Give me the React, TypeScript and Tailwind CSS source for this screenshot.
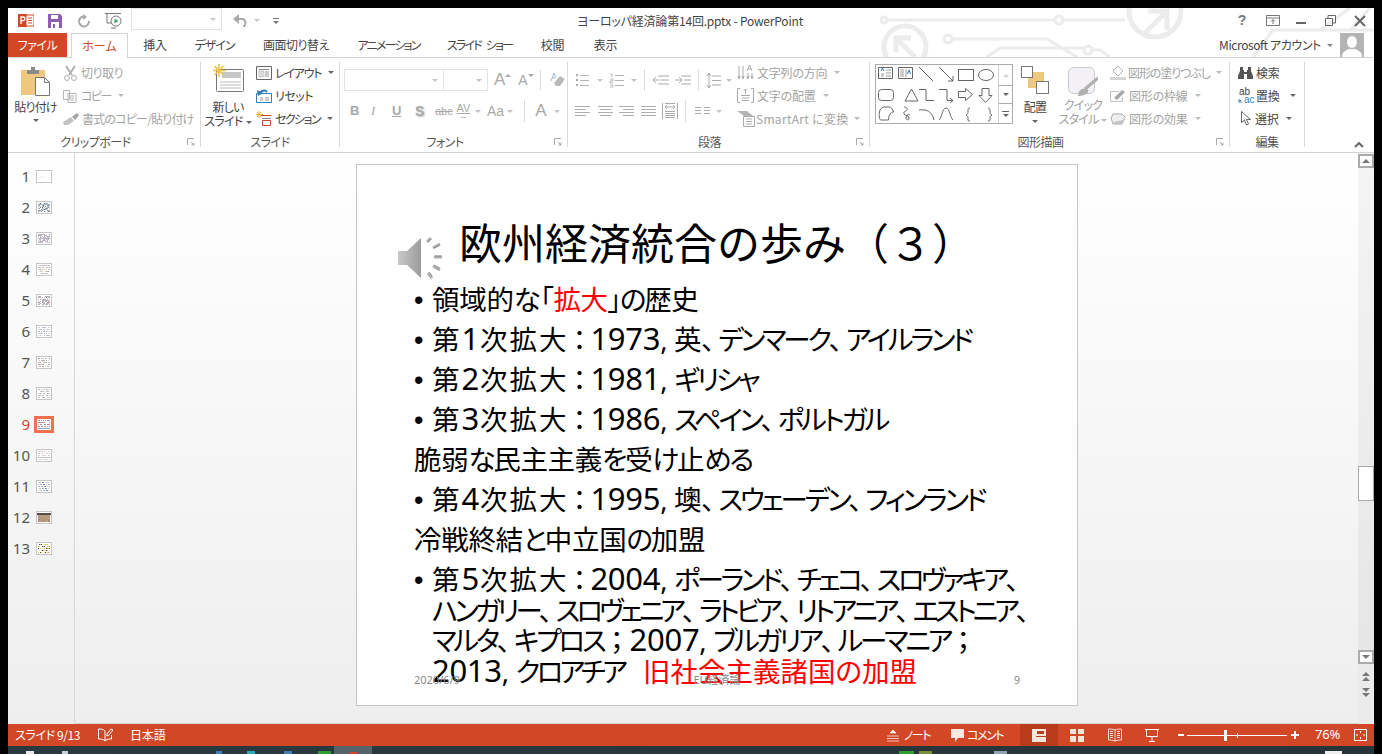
import type { ReactNode } from "react"

const ui = "font-['Noto_Sans_CJK_JP','Noto_Sans',sans-serif] [font-feature-settings:'palt']"

function Caret({ color = "border-t-[#8a8a8a]" }: { color?: string }) {
	return <span className={`inline-block w-0 h-0 border-x-[3px] border-t-[3px] border-x-transparent ${color}`} />
}

function Launcher() {
	return (
		<svg width="8" height="8" viewBox="0 0 8 8" className="absolute right-[5px] bottom-[1px]">
			<path d="M0.5 7V0.5H7M4 4l3 3M7 4.5V7H4.5" fill="none" stroke="#a8a8a8" />
		</svg>
	)
}

function Group({ width, label, children, launcher, labelPad = "" }: { width: string; label: string; children: ReactNode; launcher?: boolean; labelPad?: string }) {
	return (
		<div className={`${width} relative shrink-0 h-[85px] mt-1 flex flex-col border-r border-[#dadada]`}>
			<div className="flex h-[72px]">{children}</div>
			<div className={`h-4 -mb-[3px] text-center text-xs leading-4 text-[#555] tracking-[-0.5px] ${labelPad}`}>{label}</div>
			{launcher && <Launcher />}
		</div>
	)
}

function Row({ icon, label, caret, dark, gap = "gap-[3px]", track = "tracking-[-0.2px]" }: { icon: ReactNode; label: string; caret?: boolean; dark?: boolean; gap?: string; track?: string }) {
	return (
		<div className={`h-[23px] flex items-center ${gap} text-xs whitespace-nowrap ${dark ? "text-[#444]" : "text-[#a3a3a3]"}`}>
			{icon}
			<span className={track}>{label}</span>
			{caret && (
				<span className="ml-1 flex">
					<Caret color={dark ? "border-t-[#666]" : "border-t-[#bbb]"} />
				</span>
			)}
		</div>
	)
}

function Ico({ w = 16, h = 16, children }: { w?: number; h?: number; children: ReactNode }) {
	return (
		<svg width={w} height={h} viewBox={`0 0 ${w} ${h}`} className="shrink-0">
			{children}
		</svg>
	)
}

function Sep({ h = "h-[22px]" }: { h?: string }) {
	return <span className={`block w-px ${h} bg-[#dcdcdc] shrink-0`} />
}

function ListLines({ x = 0, c = "#b5b5b5" }: { x?: number; c?: string }) {
	return <path d={`M${x + 5} 3.5h9M${x + 5} 8.5h9M${x + 5} 13.5h9`} stroke={c} fill="none" />
}

function AlignIcon({ d }: { d: string }) {
	return (
		<Ico w={15} h={12}>
			<path d={d} stroke="#adadad" fill="none" />
		</Ico>
	)
}

function TitleArt() {
	return (
		<svg width="494" height="49" viewBox="0 0 494 49" className="absolute right-0 top-0 pointer-events-none">
			<g fill="none" stroke="#ececec" strokeWidth="3">
				<circle cx="25" cy="39" r="21" strokeWidth="5" />
				<path d="M16 44V30h15M17 31l18 18" strokeWidth="5" />
				<circle cx="4" cy="12" r="3" />
				<path d="M8 12H174M184 12H245" />
				<circle cx="179" cy="12" r="4" />
				<circle cx="275" cy="3" r="26" strokeWidth="5" />
				<path d="M263 27L286 4M268 3h19v19" strokeWidth="5" />
				<circle cx="68" cy="31" r="4" />
				<path d="M73 31H167L197 49" />
				<path d="M107 49L120 40H203" />
				<circle cx="208" cy="42" r="4" />
				<path d="M213 42H220L230 49" />
				<path d="M373 49L393 22H494M440 22L470 0M470 22L490 0" />
			</g>
		</svg>
	)
}

function TitleBar() {
	return (
		<div className="relative h-[25px] bg-white flex items-center text-xs text-[#444]">
			<TitleArt />
			<div className="relative flex items-center pl-[10px]">
				<Ico w={16} h={15}>
					<rect x="0" y="1" width="9" height="13" fill="#d24726" />
					<rect x="8" y="2" width="8" height="11" fill="#fff" stroke="#d24726" />
					<path d="M10 5h4M10 7.5h4M10 10h4" stroke="#d24726" />
					<path d="M3 11V4h2.2a1.8 1.8 0 010 3.6H3" fill="none" stroke="#fff" strokeWidth="1.3" />
				</Ico>
				<span className="w-[14px]" />
				<Ico w={14} h={14}>
					<path d="M0 0h12l2 2v12H0z" fill="#8f5bb5" />
					<rect x="3" y="1" width="7" height="4" fill="#fff" />
					<rect x="3" y="8" width="8" height="6" fill="#fff" />
					<rect x="5" y="10" width="2" height="4" fill="#8f5bb5" />
				</Ico>
				<span className="w-[15px]" />
				<Ico w={14} h={14}>
					<path d="M8 2.5A5 5 0 1 0 12 7" fill="none" stroke="#aaa" strokeWidth="2" />
					<path d="M6 0v6l4-3z" fill="#aaa" />
				</Ico>
				<span className="w-[14px]" />
				<Ico w={17} h={16}>
					<path d="M0 .5h16M2 1v9h5M6 15h5" stroke="#777" fill="none" />
					<circle cx="11" cy="8" r="5" fill="#fff" stroke="#777" />
					<path d="M9.5 5.5v5l4-2.500z" fill="#4c9b6b" />
				</Ico>
				<div className="ml-[9px] w-[91px] h-[22px] -mt-[3px] border border-[#e2e2e2] flex items-center justify-end pr-[5px]">
					<Caret color="border-t-[#c8c8c8]" />
				</div>
				<span className="w-[11px]" />
				<Ico w={16} h={13}>
					<path d="M1 5h9a4.500 4.500 0 010 8" fill="none" stroke="#aaa" strokeWidth="2" />
					<path d="M6 0L0 5l6 5z" fill="#aaa" />
				</Ico>
				<span className="ml-[5px] flex">
					<Caret color="border-t-[#c4c4c4]" />
				</span>
				<span className="ml-[13px] flex flex-col gap-[2px] items-center">
					<span className="w-[6px] h-px bg-[#777]" />
					<Caret color="border-t-[#777]" />
				</span>
			</div>
			<div className="absolute left-[560px] w-[244px] text-center text-xs tracking-[-0.2px] whitespace-nowrap text-[#444]">ヨーロッパ経済論第14回.pptx - PowerPoint</div>
			<div className="relative ml-auto flex items-center text-[#777] pr-[8px]">
				<span className="w-[12px] mr-[18px] text-center font-bold text-[14px] font-['Liberation_Sans',sans-serif]">?</span>
				<Ico w={14} h={11}>
					<path d="M.5.5h13v10H.5zM.5 3h13" fill="none" stroke="#777" />
					<path d="M7 9V5M5 6.500l2-2 2 2" fill="none" stroke="#777" />
				</Ico>
				<span className="w-[16px]" />
				<span className="w-[10px] h-[2px] bg-[#666] mt-[5px]" />
				<span className="w-[19px]" />
				<Ico w={11} h={11}>
					<path d="M.5 3.500h7v7h-7zM3 3V.5h7.500V8H8" fill="none" stroke="#666" strokeWidth="1" />
				</Ico>
				<span className="w-[18px]" />
				<Ico w={12} h={12}>
					<path d="M1 1l10 10M11 1L1 11" stroke="#666" strokeWidth="2" />
				</Ico>
			</div>
		</div>
	)
}

const tabs: [string, string][] = [
	["挿入", "w-[24px] ml-[15px] tracking-[-0.2px]"],
	["デザイン", "w-[39px] ml-[28px] tracking-[-1px]"],
	["画面切り替え", "w-[66px] ml-[29px] tracking-[-0.5px]"],
	["アニメーション", "w-[61px] ml-[29px] tracking-[-1.8px]"],
	["スライド ショー", "w-[63px] ml-[29px] tracking-[-1.8px] [word-spacing:4px]"],
	["校閲", "w-[23px] ml-[30px] tracking-[-0.2px]"],
	["表示", "w-[23px] ml-[30px] tracking-[-0.2px]"],
]

function Tabs() {
	return (
		<div className="relative h-[25px] bg-transparent flex items-stretch text-xs text-[#444] border-b border-[#d4d4d4]">
			<div className="w-[59px] bg-[#d24726] text-white flex items-center justify-center tracking-[-0.5px]">ファイル</div>
			<div className="ml-[4px] w-[57px] h-[25px] bg-white border border-b-0 border-[#d4d4d4] text-[#d24726] flex items-center justify-center">ホーム</div>
			{tabs.map(([t, c]) => (
				<div key={t} className={`${c} flex items-center justify-center whitespace-pre`}>
					{t}
				</div>
			))}
			<div className="ml-auto flex items-center pr-[10px]">
				<span className="text-xs tracking-[-0.4px] whitespace-nowrap">Microsoft アカウント</span>
				<span className="ml-[6px] flex">
					<Caret color="border-t-[#888]" />
				</span>
				<div className="ml-[7px] w-[24px] h-[24px] bg-[#b4b4b4] overflow-hidden">
					<svg width="24" height="24" viewBox="0 0 24 24">
						<ellipse cx="12" cy="9" rx="5" ry="6" fill="#fff" />
						<path d="M2 24c0-6 5-7 7-8h6c2 1 7 2 7 8z" fill="#fff" />
					</svg>
				</div>
			</div>
		</div>
	)
}

function BigLabel({ lines, gray, caret }: { lines: string[]; gray?: boolean; caret?: boolean }) {
	return (
		<div className={`text-xs leading-[14px] text-center tracking-[-0.8px] whitespace-nowrap ${gray ? "text-[#a0a0a0]" : "text-[#444]"}`}>
			{lines.map((l, i) => (
				<div key={l}>
					{l}
					{caret && i === lines.length - 1 && (
						<span className="ml-[3px] inline-flex align-middle">
							<Caret color={gray ? "border-t-[#bbb]" : "border-t-[#666]"} />
						</span>
					)}
				</div>
			))}
		</div>
	)
}

function ClipboardGroup() {
	return (
		<Group width="w-[193px]" label="クリップボード" launcher labelPad="pr-[17px]">
			<div className="w-[55px] flex flex-col items-center pt-[5px]">
				<svg width="29" height="29" viewBox="0 0 29 29">
					<rect x="0" y="3" width="24" height="25" fill="#edc87e" />
					<rect x="6" y="3" width="12" height="4" fill="#8a8a8a" />
					<rect x="10" y="0" width="4" height="4" fill="#8a8a8a" />
					<path d="M14.500 10.500h9l5 5v13h-14z" fill="#fff" stroke="#777" />
					<path d="M23.500 10.500v5h5" fill="none" stroke="#777" />
				</svg>
				<div className="mt-[4px]">
					<BigLabel lines={["貼り付け"]} />
				</div>
				<span className="mt-[5px] flex">
					<Caret color="border-t-[#666]" />
				</span>
			</div>
			<div className="flex flex-col -mt-px">
				<Row
					label="切り取り"
					track="tracking-[-0.5px]"
					icon={
						<Ico w={15} h={16}>
							<path d="M3 1l6 9M12 1L6 10" stroke="#b0b0b0" strokeWidth="2" />
							<circle cx="4" cy="13" r="2.500" fill="none" stroke="#b0b0b0" />
							<circle cx="11" cy="13" r="2.500" fill="none" stroke="#b0b0b0" />
						</Ico>
					}
				/>
				<Row
					label="コピー"
					caret
					track="tracking-[-1.5px]"
					icon={
						<Ico w={15} h={14}>
							<path d="M.5 1.500h6v9h-6zM5 4.500h8v9H5z" fill="#fff" stroke="#b5b5b5" />
							<path d="M7 7h4M7 9h4M7 11h4" stroke="#b5b5b5" />
						</Ico>
					}
				/>
				<Row
					label="書式のコピー/貼り付け"
					track="tracking-[-0.8px]"
					icon={
						<Ico w={16} h={13}>
							<path d="M0 10L8 5l3 4-6 4H1z" fill="#c2c2c2" />
							<path d="M9 5l5-4 2 2-4 5z" fill="#a0a0a0" />
						</Ico>
					}
				/>
			</div>
		</Group>
	)
}

function SlidesGroup() {
	return (
		<Group width="w-[139px]" label="スライド">
			<div className="w-[54px] flex flex-col items-center">
				<svg width="32" height="29" viewBox="0 0 32 29" className="mt-[2px] ml-[2px] shrink-0">
					<rect x="3.500" y="5.500" width="27" height="22" rx="1" fill="#fff" stroke="#777" />
					<rect x="9" y="8" width="19" height="6" fill="#c8c8c8" />
					<path d="M7 18h21M7 21h21M7 24h21" stroke="#bbb" />
					<path d="M6 0v13M0 6.500h13M1.500 2l9 9M10.500 2l-9 9" stroke="#f0c04a" strokeWidth="1.500" />
				</svg>
				<div className="mt-[7px]">
					<BigLabel lines={["新しい", "スライド"]} caret />
				</div>
			</div>
			<div className="ml-[1px] flex flex-col -mt-px">
				<Row
					label="レイアウト"
					caret
					gap="gap-[3px]"
					track="tracking-[-1.2px]"
					icon={
						<Ico w={16} h={14}>
							<path d="M.5.5h15v13H.5z" fill="#fff" stroke="#666" />
							<path d="M3 3.500h10" stroke="#888" />
							<rect x="3" y="5" width="5" height="6" fill="#ddd" stroke="#aaa" strokeWidth=".5" />
							<path d="M9 6h4M9 8h4M9 10h4" stroke="#999" />
						</Ico>
					}
					dark
				/>
				<Row
					label="リセット"
					gap="gap-[3px]"
					track="tracking-[-0.5px]"
					icon={
						<Ico w={16} h={14}>
							<path d="M.5 4.500h15v9H.5z" fill="#fff" stroke="#2f7ebc" />
							<path d="M4 5a4 4 0 017-2" fill="none" stroke="#2f7ebc" strokeWidth="2" />
							<path d="M1 1l1 6 5-3z" fill="#2f7ebc" />
							<path d="M4 9h3M4 11h3" stroke="#999" />
							<rect x="9" y="8" width="4" height="4" fill="#ccc" />
						</Ico>
					}
					dark
				/>
				<Row
					label="セクション"
					caret
					gap="gap-[3px]"
					track="tracking-[-1.6px]"
					icon={
						<Ico w={16} h={15}>
							<path d="M3 0v7M0 3.500h7M1 1l4 5M5 1L1 6" stroke="#f0b040" />
							<path d="M5 4.500h10.500M6.500 9.500h8v5h-8z" stroke="#d24726" fill="none" />
							<path d="M6 7.500h9" stroke="#888" />
						</Ico>
					}
					dark
				/>
			</div>
		</Group>
	)
}

function FontGroup() {
	return (
		<Group width="w-[228px]" label="フォント" launcher labelPad="pr-[17px]">
			<div className="pl-[4px] flex flex-col">
				<div className="mt-[7px] flex items-center h-[22px]">
					<div className="w-[100px] h-[22px] border border-[#e2e2e2] flex items-center justify-end pr-[5px]">
						<Caret color="border-t-[#c4c4c4]" />
					</div>
					<div className="w-[44px] h-[22px] border border-l-0 border-[#e2e2e2] flex items-center justify-end pr-[5px]">
						<Caret color="border-t-[#c4c4c4]" />
					</div>
					<span className="ml-[6px] text-[17px] text-[#a8a8a8] font-['Liberation_Sans',sans-serif]">A</span>
					<span className="-mt-[9px] flex rotate-180">
						<Caret color="border-t-[#a8a8a8]" />
					</span>
					<span className="ml-[7px] text-[14px] text-[#a8a8a8] font-['Liberation_Sans',sans-serif]">A</span>
					<span className="-mt-[9px] flex">
						<Caret color="border-t-[#a8a8a8]" />
					</span>
					<span className="ml-[6px]">
						<Sep h="h-[20px]" />
					</span>
					<span className="ml-[8px] flex">
						<Ico w={16} h={16}>
							<path d="M7 14l-2-3 6-7 5 3-5 7z" fill="#b9b9b9" />
							<path d="M2 9l3-8 2 5M3 6h3" fill="none" stroke="#9dbbd6" />
						</Ico>
					</span>
				</div>
				<div className="mt-[9px] h-[22px] flex items-center text-[#a9a9a9] font-['Liberation_Sans',sans-serif]">
					<span className="ml-[6px] w-[21px] text-[13px] font-bold">B</span>
					<span className="w-[21px] text-[13px] italic font-['Liberation_Serif',serif]">I</span>
					<span className="w-[23px] text-[13px] font-bold underline">U</span>
					<span className="w-[20px] text-[14px] font-bold [text-shadow:1px_1px_2px_#bbb]">S</span>
					<span className="w-[19px] text-[11px] line-through">abc</span>
					<span className="w-[19px] flex flex-col items-center text-[11px] leading-[10px]">
						<span className="underline">AV</span>
						<span className="text-[9px] leading-[7px]">↔</span>
					</span>
					<span className="ml-[2px] w-[6px] flex">
						<Caret color="border-t-[#c4c4c4]" />
					</span>
					<span className="ml-[6px] text-[14px]">Aa</span>
					<span className="ml-[3px] flex">
						<Caret color="border-t-[#c4c4c4]" />
					</span>
					<span className="ml-[11px]">
						<Sep />
					</span>
					<span className="ml-[10px] text-[17px]">A</span>
					<span className="ml-[8px] flex">
						<Caret color="border-t-[#c4c4c4]" />
					</span>
				</div>
			</div>
		</Group>
	)
}

function ParagraphGroup() {
	const dd = (
		<span className="flex">
			<Caret color="border-t-[#c4c4c4]" />
		</span>
	)
	return (
		<Group width="w-[302px]" label="段落" launcher labelPad="pr-[18px]">
			<div className="w-[169px] pl-[7px] flex flex-col">
				<div className="mt-[7px] h-[22px] flex items-center">
					<Ico w={15} h={16}>
						<path d="M1 3h2M1 8h2M1 13h2" stroke="#aaa" strokeWidth="2" />
						<ListLines />
					</Ico>
					<span className="ml-[7px]">{dd}</span>
					<span className="ml-[6px]" />
					<Ico w={16} h={16}>
						<path d="M1 2h2v3M1 7h3v2H1v2h3M1 13h3v2H1" stroke="#aaa" fill="none" strokeWidth=".8" />
						<ListLines x={1} />
					</Ico>
					<span className="ml-[6px]">{dd}</span>
					<span className="ml-[7px]">
						<Sep />
					</span>
					<span className="ml-[7px] flex">
						<Ico w={17} h={12}>
							<path d="M6 2h11M9 6h8M6 10h11" stroke="#aaa" fill="none" />
							<path d="M8 6H1M4 3L1 6l3 3" stroke="#aaa" fill="none" />
						</Ico>
					</span>
					<span className="ml-[6px] flex">
						<Ico w={16} h={12}>
							<path d="M6 2h10M9 6h7M6 10h10" stroke="#aaa" fill="none" />
							<path d="M0 6h7M4 3l3 3-3 3" stroke="#aaa" fill="none" />
						</Ico>
					</span>
					<span className="ml-[7px]">
						<Sep />
					</span>
					<span className="ml-[7px] flex">
						<Ico w={15} h={17}>
							<path d="M6 4h9M6 8.500h9M6 13h9" stroke="#aaa" fill="none" />
							<path d="M3 1v15M1 4l2-3 2 3M1 13l2 3 2-3" stroke="#aaa" fill="none" />
						</Ico>
					</span>
					<span className="ml-[5px]">{dd}</span>
				</div>
				<div className="mt-[9px] h-[22px] flex items-center">
					<AlignIcon d="M0 1.500h15M0 4.500h11M0 7.500h15M0 10.500h11" />
					<span className="w-[8px]" />
					<AlignIcon d="M0 1.500h15M2 4.500h11M0 7.500h15M2 10.500h11" />
					<span className="w-[6px]" />
					<AlignIcon d="M0 1.500h15M4 4.500h11M0 7.500h15M4 10.500h11" />
					<span className="w-[7px]" />
					<AlignIcon d="M0 1.500h15M0 4.500h15M0 7.500h15M0 10.500h15" />
					<span className="w-[6px]" />
					<Ico w={16} h={18}>
						<path d="M.5 1v16M15.500 1v16M3 1.500h10M3 15.500h10M3 11.500h10M3 13.500h10M3 9.500h10" stroke="#aaa" fill="none" />
						<path d="M3 5h10M5 3L3 5l2 2M11 3l2 2-2 2" stroke="#aaa" fill="none" />
					</Ico>
					<span className="ml-[7px]">
						<Sep />
					</span>
					<span className="w-[9px]" />
					<Ico w={15} h={10}>
						<path d="M0 1.500h6M9 1.500h6M0 4.500h6M9 4.500h6M0 7.500h6M9 7.500h6" stroke="#aaa" fill="none" />
					</Ico>
					<span className="ml-[6px]">{dd}</span>
				</div>
			</div>
			<div className="flex flex-col -mt-px">
				<Row
					label="文字列の方向"
					caret
					icon={
						<Ico w={17} h={17}>
							<path d="M2 2v12M6 2v12M1 12l1 3 1-3M5 12l1 3 1-3" stroke="#aaa" fill="none" />
							<path d="M10 7l2.500-6L15 7M11 5h3M11 9v5M15 9v5M10 12l1 3 1-3M14 12l1 3 1-3" stroke="#aaa" fill="none" />
						</Ico>
					}
				/>
				<Row
					label="文字の配置"
					caret
					icon={
						<Ico w={17} h={15}>
							<path d="M3 .5H.5v14H3M14 .5h2.500v14H14" stroke="#aaa" fill="none" />
							<path d="M4 7.500h9M5 10h7M5 12.500h7" stroke="#aaa" />
							<path d="M8.500 1v5M7 2.500L8.500 1 10 2.500" stroke="#aaa" fill="none" />
						</Ico>
					}
				/>
				<Row
					label="SmartArt に変換"
					caret
					gap="gap-[1px]"
					track="tracking-[0.3px]"
					icon={
						<Ico w={18} h={16}>
							<path d="M0 0h10l6 5H7z" fill="#b5b5b5" />
							<path d="M6.500 5.500h11v10h-11z" fill="#fff" stroke="#aaa" />
							<path d="M9 8h6M9 10.500h6M9 13h6" stroke="#aaa" />
						</Ico>
					}
				/>
			</div>
		</Group>
	)
}

function ShapeGallery() {
	return (
		<div className="mt-[2px] ml-[5px] w-[138px] h-[60px] border border-[#ababab] flex bg-white shrink-0">
			<svg width="122" height="58" viewBox="0 0 122 58" className="shrink-0">
				<g transform="translate(-1 -1)" fill="none" stroke="#666">
					<path d="M3.500 3.500h14v11h-14z" />
					<path d="M6 7l1.500-3 1.500 3" stroke="#2f7ebc" />
					<path d="M6 10h3M11 6h5M11 9h5M11 12h5M6 12h3" stroke="#999" />
					<path d="M23.500 3.500h14v11h-14z" />
					<path d="M26 5v8M28 5v8M31 5v8" stroke="#999" />
					<path d="M32.500 10l1.500-4 1.500 4" stroke="#2f7ebc" />
					<path d="M44 3l14 14" />
					<path d="M64 3l14 14M73 17h5v-5" />
					<rect x="83.500" y="5.500" width="15" height="11" />
					<ellipse cx="111" cy="11" rx="7.500" ry="5.500" />
					<rect x="3.500" y="25.500" width="15" height="11" rx="3" />
					<path d="M30 37l6.500-12L43 37z" />
					<path d="M44 25.500h7v11h8" />
					<path d="M64 25.500h8v11h6M75 34l3 2.500-3 2.500" />
					<path d="M83.500 27.500h7v-3l7 6-7 6v-3h-7z" />
					<path d="M107 24.500h7v7h3l-6.500 7-6.500-7h3z" />
					<path d="M4.500 48c0-3 3-5 5-5l4 0c3 0 4 2 5 5 0 0-5 0-5 8H6c-2 0-2-5-1.500-8z" />
					<path d="M29 43c2 0 4 1 3 3s-4 1-3 4c1 2 5 1 5 4s-3 2-3 0c0-3 3-4 4-3" />
					<path d="M44 46c7-1 13 1 15 10" />
					<path d="M64 56c3-2 3-12 7-12s4 10 7 12" />
					<path d="M95 44c-2 0-2 1-2 3s0 3-2 4c2 1 2 2 2 4s0 2 2 2" />
					<path d="M113 44c2 0 2 1 2 3s0 3 2 4c-2 1-2 2-2 4s0 2-2 2" />
				</g>
			</svg>
			<div className="flex-1 flex flex-col border-l border-[#d0d0d0]">
				<div className="h-[20px] flex items-center justify-center">
					<span className="flex rotate-180">
						<Caret color="border-t-[#cfcfcf]" />
					</span>
				</div>
				<div className="h-[19px] flex items-center justify-center border-y border-[#ababab]">
					<Caret color="border-t-[#666]" />
				</div>
				<div className="flex-1 flex flex-col items-center justify-center gap-[2px]">
					<span className="w-[7px] h-px bg-[#666]" />
					<Caret color="border-t-[#666]" />
				</div>
			</div>
		</div>
	)
}

function DrawingGroup() {
	return (
		<Group width="w-[360px]" label="図形描画" launcher labelPad="pr-[18px]">
			<ShapeGallery />
			<div className="w-[44px] shrink-0 flex flex-col items-center pt-[4px]">
				<svg width="28" height="28" viewBox="0 0 28 28" className="shrink-0">
					<rect x="7" y="6" width="16" height="16" fill="#edc87e" />
					<rect x=".5" y=".5" width="11" height="11" fill="#fff" stroke="#777" />
					<rect x="15.500" y="15.500" width="12" height="12" fill="#fff" stroke="#777" />
				</svg>
				<div className="mt-[6px]">
					<BigLabel lines={["配置"]} />
				</div>
				<span className="mt-[6px] flex">
					<Caret color="border-t-[#666]" />
				</span>
			</div>
			<div className="w-[52px] shrink-0 flex flex-col items-center pt-[5px]">
				<svg width="30" height="30" viewBox="0 0 30 30" className="shrink-0">
					<rect x=".5" y=".5" width="26" height="26" rx="5" fill="#f4f1f6" stroke="#c8c8c8" />
					<path d="M30 11L17 22" stroke="#b0b0b0" strokeWidth="3" />
					<path d="M10 29c0-6 5-9 9-7s-1 7-9 7z" fill="#b0b0b0" />
				</svg>
				<div className="mt-[1px]">
					<BigLabel lines={["クイック", "スタイル"]} gray caret />
				</div>
			</div>
			<div className="flex flex-col shrink-0 ml-px -mt-px">
				<Row
					label="図形の塗りつぶし"
					caret
					gap="gap-[2px]"
					track="tracking-[-1.1px]"
					icon={
						<Ico w={16} h={15}>
							<path d="M3 6l5-5 5 5-5 5z" fill="#fff" stroke="#b0b0b0" />
							<rect x="0" y="12" width="16" height="3" fill="#d5d5d5" />
						</Ico>
					}
				/>
				<Row
					label="図形の枠線"
					caret
					gap="gap-[3px]"
					icon={
						<Ico w={16} h={14}>
							<path d="M9 2.500H.5v10h12V8" fill="none" stroke="#c0c0c0" />
							<path d="M4 9l8-8 3 2-8 8z" fill="#a5a5a5" />
						</Ico>
					}
				/>
				<Row
					label="図形の効果"
					caret
					gap="gap-[3px]"
					icon={
						<Ico w={16} h={12}>
							<path d="M3 1h9l3 3-3 7H3L1 5z" fill="#efefef" stroke="#a8a8a8" />
							<path d="M4 11h9l2-6-2 2-9 2z" fill="#c4c4c4" />
						</Ico>
					}
				/>
			</div>
		</Group>
	)
}

function EditGroup() {
	return (
		<Group width="w-[75px]" label="編集">
			<div className="pl-[8px] flex flex-col -mt-px">
				<Row
					label="検索"
					dark
					gap="gap-[3px]"
					icon={
						<Ico w={15} h={13}>
							<path d="M2 1h3v3h1v2h3V4h1V1h3v4l2 5v3H9V8H6v5H0v-3l2-5z" fill="#555" />
						</Ico>
					}
				/>
				<div className="h-[23px] flex items-center text-xs text-[#444]">
					<Ico w={15} h={15}>
						<path d="M1 11v3h3M1 14l2-2" stroke="#2f7ebc" fill="none" />
					</Ico>
					<span className="absolute ml-[1px] text-[10px] leading-[8px] font-['Liberation_Sans',sans-serif]">
						<span className="block">ab</span>
						<span className="block pl-[5px] text-[#2f7ebc]">ac</span>
					</span>
					<span className="ml-[3px] tracking-[-0.2px]">置換</span>
					<span className="ml-[10px] flex">
						<Caret color="border-t-[#666]" />
					</span>
				</div>
				<Row
					label="選択"
					caret
					dark
					gap="gap-[3px]"
					icon={
						<span className="ml-[3px] flex">
							<Ico w={11} h={15}>
								<path d="M.5.5v11l3-2.500 2 5 2-1-2-4.500h4z" fill="#fff" stroke="#666" />
							</Ico>
						</span>
					}
				/>
			</div>
		</Group>
	)
}

function Ribbon() {
	return (
		<div className="relative h-[95px] bg-transparent flex items-start border-b border-[#d4d4d4]">
			<ClipboardGroup />
			<SlidesGroup />
			<FontGroup />
			<ParagraphGroup />
			<DrawingGroup />
			<EditGroup />
			<div className="ml-auto self-end mb-[4px] mr-[10px] flex">
				<svg width="10" height="6" viewBox="0 0 10 6">
					<path d="M1 5l4-4 4 4" fill="none" stroke="#666" strokeWidth="2" />
				</svg>
			</div>
		</div>
	)
}

const thumbPalette: string[][] = [
	["#e4e4e4", "#d8e2ea"],
	["#8fa3b5", "#c4c4c4", "#6e8094", "#5a5a5a"],
	["#a5a5b5", "#c9a9bb", "#9a9aa8", "#b9b9b9"],
	["#c9b48f", "#bcbcbc", "#9a9a9a", "#cbcbcb"],
	["#a796a7", "#93a6b8", "#c49292", "#a8a8a8"],
	["#99aabb", "#bcbcbc", "#9fb1c4", "#cfcfcf"],
	["#aaaaaa", "#c49898", "#a09a78", "#cfcfcf"],
	["#99aabb", "#aaaaaa", "#bcbcbc", "#aaaaaa"],
	["#6688aa", "#5a8ab0", "#c66666", "#ff6666"],
	["#cccccc", "#bbbbbb", "#ddbbbb", "#dddddd"],
	["#5566bb", "#9999aa", "#aaaabb", "#bbbbbb"],
	["#a88855", "#997766", "#aa8866", "#8a6a4a"],
	["#ccbb55", "#222222", "#ddcc33", "#cc9966"],
]

function ThumbArt({ n, w, h }: { n: number; w: number; h: number }) {
	const palette = thumbPalette[n - 1]
	const cells: ReactNode[] = []
	for (let y = 1; y < h - 1; y++) {
		for (let x = 1; x < w - 1; x++) {
			const hash = (x * 7 + y * 13 + n * 31 + x * y * n) % 11
			const solid = n === 12 && y > 2 && x > 0
			if (n === 1 && (y < 3 || y > 7 || x < 4 || x > 9)) continue
			if (n !== 12 && y % 2 === 0 && n !== 2 && n !== 5 && n !== 3) continue
			if (!solid && hash > (n === 1 ? 2 : 6)) continue
			cells.push(<rect key={`${x}-${y}`} x={x} y={y} width="1" height="1" fill={palette[hash % palette.length]} />)
		}
	}
	return (
		<svg width={w} height={h} viewBox={`0 0 ${w} ${h}`} className="block opacity-80">
			{cells}
			{n === 12 && <rect x="0" y="1" width={w} height="2" fill="#222" />}
		</svg>
	)
}

function Thumb({ n }: { n: number }) {
	const active = n === 9
	return (
		<div className="h-[31px] flex items-center shrink-0">
			<span className={`w-[22px] text-right text-[15px] font-['Noto_Sans',sans-serif] ${active ? "text-[#d24726]" : "text-[#555]"}`}>{n}</span>
			<div className={`bg-white ${active ? "ml-[4px] w-[20px] h-[17px] border-[3px] border-[#f0704f]" : "ml-[6px] w-[16px] h-[13px] border border-[#c6c6c6]"}`}>
				<ThumbArt n={n} w={14} h={11} />
			</div>
		</div>
	)
}

function Speaker() {
	return (
		<svg width="50" height="48" viewBox="0 0 50 48" className="shrink-0 mt-[34px]">
			<defs>
				<linearGradient id="spk" x1="0" x2="1" y1="0" y2="0">
					<stop offset="0" stopColor="#c8c8c8" />
					<stop offset="1" stopColor="#9c9c9c" />
				</linearGradient>
			</defs>
			<path d="M1 16h9L24 3v40L10 30H1z" fill="url(#spk)" />
			<path d="M30 7l4-4M36 13l7-4M37 22h8M36 31l7 4M31 38l4 5" stroke="#b0b0b0" strokeWidth="3" fill="none" />
			<path d="M31 7l3-3M37 13l6-3M38 21h6M37 30l6 3M32 37l3 4" stroke="#777" strokeWidth=".7" fill="none" />
		</svg>
	)
}

// kana runs are narrower than the kanji in the original font, digits larger, punctuation wider than palt gives
function fmt(text: string, kata = "tracking-[-3.2px]") {
	return text.split(/([：；、]|[\u3040-\u309f]+|[\u30a0-\u30ff]+|\d+)/).map((part, i) => {
		if (!part) return null
		if (part === "：") return <span key={i} className="inline-block w-[22px] text-center">：</span>
		if (part === "；") return <span key={i} className="inline-block w-[26px] text-center">；</span>
		if (part === "、") return <span key={i} className="inline-block w-[17px]">、</span>
		if (/^\d$/.test(part)) return <span key={i} className="text-[31px] leading-none mx-px">{part}</span>
		if (/^\d/.test(part)) return <span key={i} className="text-[31px] leading-none">{part}</span>
		if (/^[\u3040-\u309f]/.test(part)) return <span key={i} className="tracking-[-2.2px]">{part}</span>
		if (/^[\u30a0-\u30ff]/.test(part)) return <span key={i} className={kata}>{part}</span>
		if (part === "第") return <span key={i} className="tracking-[1px]">{part}</span>
		if (part === "次拡大") return <span key={i} className="tracking-[2px]">{part}</span>
		return <span key={i}>{part}</span>
	})
}

function Bullet({ children, tight }: { children: ReactNode; tight?: boolean }) {
	return (
		<div className={`h-[40px] flex items-center whitespace-nowrap ${tight ? "-mb-[5px]" : ""}`}>
			<span className="w-[18px] text-[27px] leading-none font-['Liberation_Sans',sans-serif]">•</span>
			<span>{children}</span>
		</div>
	)
}

function Plain({ children }: { children: ReactNode }) {
	return (
		<div className="h-[40px] flex items-center whitespace-nowrap">
			<span>{children}</span>
		</div>
	)
}

function Wrapped({ children }: { children: ReactNode }) {
	return (
		<div className="h-[30.500px] pl-[18px] flex items-center whitespace-nowrap">
			<span>{children}</span>
		</div>
	)
}

function Slide() {
	return (
		<div className="relative w-[722px] h-[542px] shrink-0 bg-white border border-[#c6c6c6] text-black font-['Noto_Sans','Noto_Sans_CJK_JP',sans-serif] [font-feature-settings:'palt']">
			<div className="pt-[48px] pl-[40px] flex items-center h-[105px]">
				<Speaker />
				<span className="ml-[12px] text-[43px] leading-none whitespace-nowrap font-['Noto_Sans_CJK_JP',sans-serif] [font-feature-settings:normal]">欧州経済統合の歩み（３）</span>
			</div>
			<div className="pl-[57px] pt-[10px] text-[27.500px] tracking-[-0.3px]">
				<Bullet>
					{fmt("領域的な")}
					<span className="inline-block w-[15px] text-right">「</span>
					<span className="text-[#ff0000]">拡大</span>
					<span className="inline-block w-[12px]">」</span>
					{fmt("の歴史")}
				</Bullet>
				<Bullet>{fmt("第1次拡大：1973, 英、デンマーク、アイルランド")}</Bullet>
				<Bullet>{fmt("第2次拡大：1981, ギリシャ")}</Bullet>
				<Bullet>{fmt("第3次拡大：1986, スペイン、ポルトガル")}</Bullet>
				<Plain>{fmt("脆弱な民主主義を受け止める")}</Plain>
				<Bullet>{fmt("第4次拡大：1995, 墺、スウェーデン、フィンランド")}</Bullet>
				<Plain>{fmt("冷戦終結と中立国の加盟")}</Plain>
				<Bullet tight>{fmt("第5次拡大：2004, ポーランド、チェコ、スロヴァキア、", "tracking-[-3.6px]")}</Bullet>
				<Wrapped>{fmt("ハンガリー、スロヴェニア、ラトビア、リトアニア、エストニア、", "tracking-[-4px]")}</Wrapped>
				<Wrapped>{fmt("マルタ、キプロス；2007, ブルガリア、ルーマニア；")}</Wrapped>
				<Wrapped>
					{fmt("2013, クロアチア", "tracking-[-3.8px]")}
					<span className="ml-[19px] tracking-[0px] text-[#ff0000]">旧社会主義諸国の加盟</span>
				</Wrapped>
			</div>
			<div className="absolute left-[57px] right-[57px] top-[507px] grid grid-cols-3 text-[11px] text-[#8a8a8a]">
				<span>2020/6/9</span>
				<span className="text-center">EU経済論</span>
				<span className="text-right">9</span>
			</div>
		</div>
	)
}

function ScrollBtn({ up }: { up?: boolean }) {
	return (
		<div className="h-[14px] bg-white border-2 border-[#ababab] flex items-center justify-center">
			<span className={`flex ${up ? "rotate-180" : ""}`}>
				<span className="w-0 h-0 border-x-[4px] border-t-[4px] border-x-transparent border-t-[#777]" />
			</span>
		</div>
	)
}

function DoubleArrow({ up }: { up?: boolean }) {
	return (
		<div className={`flex flex-col items-center gap-px ${up ? "rotate-180" : ""}`}>
			<span className="w-0 h-0 border-x-[4px] border-t-[4px] border-x-transparent border-t-[#777]" />
			<span className="w-0 h-0 border-x-[4px] border-t-[4px] border-x-transparent border-t-[#777]" />
		</div>
	)
}

function ScrollBar() {
	return (
		<div className="w-[16px] shrink-0 flex flex-col bg-gradient-to-b from-[#f2f2f2] to-[#eaeaea]">
			<div className="h-[1px]" />
			<ScrollBtn up />
			<div className="flex-1 max-h-[482px] bg-gradient-to-b from-[#f4f4f4] to-[#e6e6e6] relative">
				<div className="absolute left-0 right-0 top-[298px] h-[35px] bg-white border border-[#ababab]" />
			</div>
			<ScrollBtn />
			<div className="mt-[8px] flex flex-col items-center gap-[7px]">
				<DoubleArrow up />
				<DoubleArrow />
			</div>
		</div>
	)
}

function StatusBar() {
	return (
		<div className="h-[22px] shrink-0 bg-[#d24726] text-white text-xs flex items-center tracking-[-0.2px]">
			<span className="ml-[7px] whitespace-nowrap tracking-[-0.4px]">スライド 9/13</span>
			<span className="ml-[18px] flex">
				<Ico w={15} h={14}>
					<path d="M7 3C5 1 3 1 .5 1v10c2.500 0 4.500 0 6.500 2 2-2 4-2 6.500-2V7M7 3v10" fill="none" stroke="#fff" />
					<path d="M9 6l4-5 2 1-4 5-2 1z" fill="none" stroke="#fff" />
				</Ico>
			</span>
			<span className="ml-[17px] text-xs">日本語</span>
			<div className="ml-auto flex items-center h-full">
				<Ico w={12} h={13}>
					<path d="M3 4l3-3 3 3zM0 7h12M0 9.500h12M0 12h12" fill="#fff" stroke="#fff" strokeWidth=".7" />
				</Ico>
				<span className="ml-[5px] w-[27px] whitespace-nowrap tracking-[-1.5px]">ノート</span>
				<span className="ml-[20px] flex">
					<Ico w={13} h={13}>
						<path d="M0 0h13v9H7l-3 4V9H0z" fill="#fde8df" />
					</Ico>
				</span>
				<span className="ml-[3px] w-[35px] whitespace-nowrap tracking-[-1.4px]">コメント</span>
				<div className="ml-[18px] w-[38px] h-full bg-[#b83b1c] flex items-center justify-center">
					<Ico w={14} h={13}>
						<path d="M0 0h14v13H0z" fill="#fbe4da" />
						<path d="M5 2h7v3H5zM4 7h10v1H4z" fill="#b83b1c" />
					</Ico>
				</div>
				<div className="w-[38px] flex justify-center">
					<Ico w={14} h={13}>
						<path d="M0 0h6v5H0zM8 0h6v5H8zM0 7h6v6H0zM8 7h6v6H8z" fill="#fbe4da" />
					</Ico>
				</div>
				<div className="w-[38px] flex justify-center">
					<Ico w={14} h={14}>
						<path d="M7 2C5 1 2 1 .5 1v11c2 0 4 0 6.500 1 2.500-1 4.500-1 6.500-1V1C12 1 9 1 7 2zM7 2v11M2 3.500h3M2 5.500h3M2 7.500h3M2 9.500h3M9 3.500h3M9 5.500h3M9 7.500h3M9 9.500h3" fill="none" stroke="#fff" strokeWidth=".8" />
					</Ico>
				</div>
				<div className="w-[36px] flex justify-center">
					<Ico w={14} h={13}>
						<path d="M0 .5h14M1.500 1v6.500h11V1M7 8v4M4 12.500h6" fill="none" stroke="#fff" />
					</Ico>
				</div>
				<span className="ml-[8px] w-[6px] h-[2px] bg-white" />
				<div className="relative ml-[3px] w-[100px] h-px bg-white">
					<span className="absolute left-[37px] -top-[5px] w-[3px] h-[11px] bg-white" />
					<span className="absolute left-[50px] -top-[2px] w-px h-[5px] bg-white" />
				</div>
				<span className="ml-[4px] w-[8px] h-[8px] flex items-center justify-center relative">
					<span className="absolute w-[8px] h-[2px] bg-white" />
					<span className="absolute w-[2px] h-[8px] bg-white" />
				</span>
				<span className="ml-[16px] w-[26px] text-[13px] font-['Noto_Sans',sans-serif]">76%</span>
				<span className="ml-[13px] mr-[7px] flex">
					<Ico w={13} h={12}>
						<path d="M.5.5h12v11H.5z" fill="none" stroke="#fff" />
						<path d="M6.500 2v2M6.500 8v2M2 6h2M9 6h2" stroke="#fff" />
					</Ico>
				</span>
			</div>
		</div>
	)
}

const trayBits = [
	"ml-[18px] w-[8px] bg-[#e8e8e8]",
	"ml-[28px] w-[6px] bg-[#c9d0d4]",
	"ml-[148px] w-[6px] bg-[#3f7fb5]",
	"ml-[25px] w-[8px] bg-[#2fa9b5]",
	"ml-[29px] w-[8px] bg-[#3e7fb8]",
	"ml-[26px] w-[13px] bg-[#2e9c2e]",
]

function Taskbar() {
	return (
		<div className="h-[8px] shrink-0 bg-gradient-to-r from-[#2b3a40] to-[#27343a] flex items-end">
			{trayBits.map((c) => (
				<span key={c} className={`h-[3px] ${c}`} />
			))}
			<div className="ml-[3px] w-[38px] h-full bg-[#56646a] flex items-end justify-center">
				<span className="w-[7px] h-[2px] bg-[#d24726]" />
			</div>
			<span className="ml-[527px] h-[3px] w-[15px] bg-[#2e9c2e]" />
			<span className="ml-[5px] h-[3px] w-[13px] bg-[#7a8f3c]" />
			<span className="ml-[62px] h-[3px] w-[13px] bg-[#8fa3b5]" />
			<span className="ml-[318px] h-[3px] w-[17px] bg-[#eee]" />
		</div>
	)
}

export default function App() {
	return (
		<div className={`w-[1382px] h-[754px] bg-black pt-2 px-2 overflow-hidden ${ui}`}>
			<div className="h-full flex flex-col bg-white">
				<TitleBar />
				<Tabs />
				<Ribbon />
				<div className="flex-1 min-h-0 flex bg-gradient-to-b from-white to-[#eeeeee]">
					<div className="w-[67px] shrink-0 border-r border-[#d8d8d8] pt-[8px] flex flex-col">
						{Array.from({ length: 13 }, (_, i) => (
							<Thumb key={i} n={i + 1} />
						))}
					</div>
					<div className="flex-1 flex flex-col min-w-0">
						<div className="flex-1 flex justify-center pt-[11px] pl-[1px]">
							<Slide />
						</div>
						<div className="h-[3px] border-b border-[#d4d4d4]" />
					</div>
					<ScrollBar />
				</div>
				<StatusBar />
				<Taskbar />
			</div>
		</div>
	)
}
